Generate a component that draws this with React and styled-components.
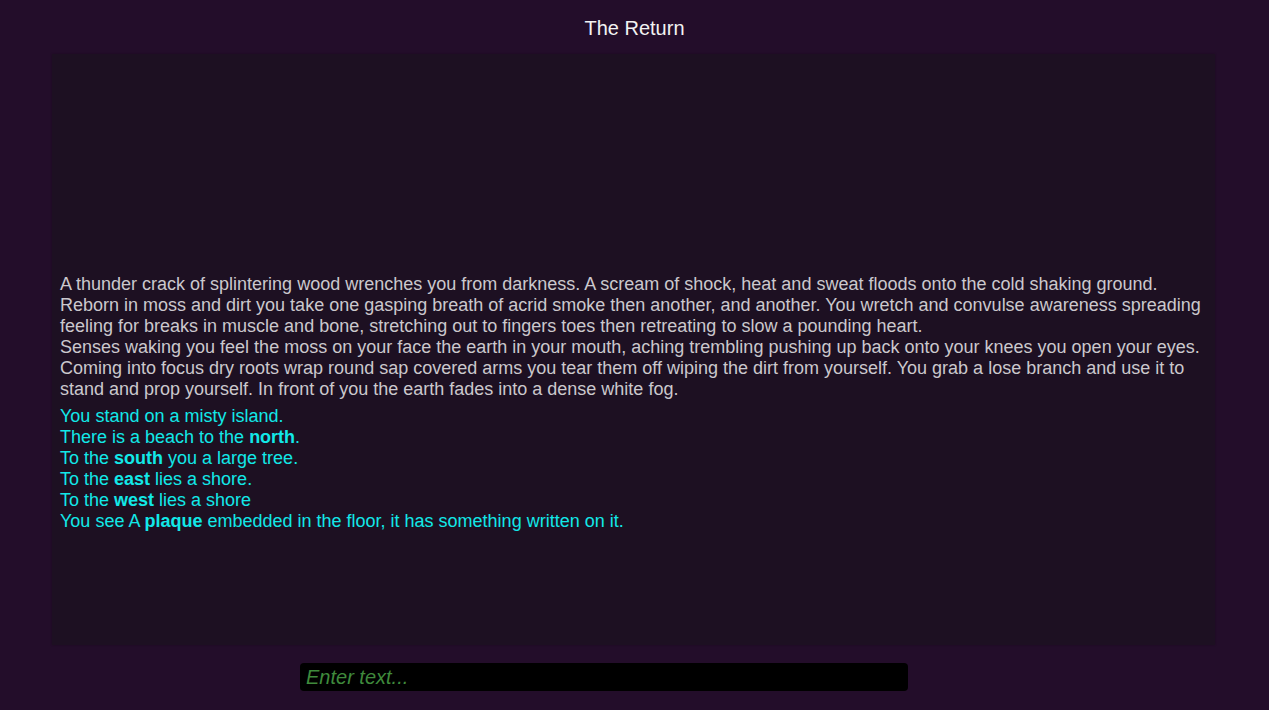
import React, { useState } from "react";
import styled, { createGlobalStyle } from "styled-components";

const intro = [
  "A thunder crack of splintering wood wrenches you from darkness. A scream of shock, heat and sweat floods onto the cold shaking ground. Reborn in moss and dirt you take one gasping breath of acrid smoke then another, and another. You wretch and convulse awareness spreading feeling for breaks in muscle and bone, stretching out to fingers toes then retreating to slow a pounding heart.",
  "Senses waking you feel the moss on your face the earth in your mouth, aching trembling pushing up back onto your knees you open your eyes. Coming into focus dry roots wrap round sap covered arms you tear them off wiping the dirt from yourself. You grab a lose branch and use it to stand and prop yourself. In front of you the earth fades into a dense white fog.",
];

const App = () => {
  const [input, setInput] = useState("");

  return (
    <Page>
      <GlobalStyle />
      <Header>The Return</Header>
      <Console>
        <Story>
          {intro.map((line, i) => (
            <div key={i}>{line}</div>
          ))}
        </Story>
        <Room>
          <div>You stand on a misty island.</div>
          <div>
            There is a beach to the <b>north</b>.
          </div>
          <div>
            To the <b>south</b> you a large tree.
          </div>
          <div>
            To the <b>east</b> lies a shore.
          </div>
          <div>
            To the <b>west</b> lies a shore
          </div>
          <div>
            You see A <b>plaque</b> embedded in the floor, it has something
            written on it.
          </div>
        </Room>
      </Console>
      <InputRow>
        <Prompt
          autoFocus
          placeholder="Enter text..."
          value={input}
          onChange={e => setInput(e.target.value)}
        />
      </InputRow>
    </Page>
  );
};

export default App;

const GlobalStyle = createGlobalStyle`
  html, body {
    margin: 0;
    padding: 0;
    background: #230d2a;
  }
`;

const Page = styled.div`
  height: 710px;
  display: flex;
  flex-direction: column;
  font-family: "Liberation Sans", Arial, sans-serif;
  background: #230d2a;
`;

const Header = styled.div`
  height: 54px;
  display: flex;
  align-items: center;
  justify-content: center;
  color: #f2f2f2;
  font-size: 20px;
  padding-top: 3px;
  box-sizing: border-box;
`;

const Console = styled.div`
  margin: 0 54px 0 52px;
  height: 591px;
  background: #1d1022;
  box-shadow: 0 0 2px rgba(0, 0, 0, 0.25);
  padding: 0 8px 113px;
  box-sizing: border-box;
  display: flex;
  flex-direction: column;
  justify-content: flex-end;
  font-size: 18px;
  line-height: 21px;
`;

const Story = styled.div`
  color: #cbc8cd;
`;

const Room = styled.div`
  color: #12e8e8;
  margin-top: 6px;

  b {
    font-weight: 700;
  }
`;

const InputRow = styled.div`
  display: flex;
  justify-content: center;
  padding-top: 18px;
`;

const Prompt = styled.input`
  width: 608px;
  height: 28px;
  margin-left: -61px;
  box-sizing: border-box;
  background: #000;
  border: none;
  border-radius: 4px;
  padding: 0 6px;
  color: #6fdc4a;
  caret-color: #7cff3c;
  font-family: "Liberation Sans", Arial, sans-serif;
  font-style: italic;
  font-size: 20px;
  outline: none;

  &::placeholder {
    color: #3f8a3c;
  }
`;
